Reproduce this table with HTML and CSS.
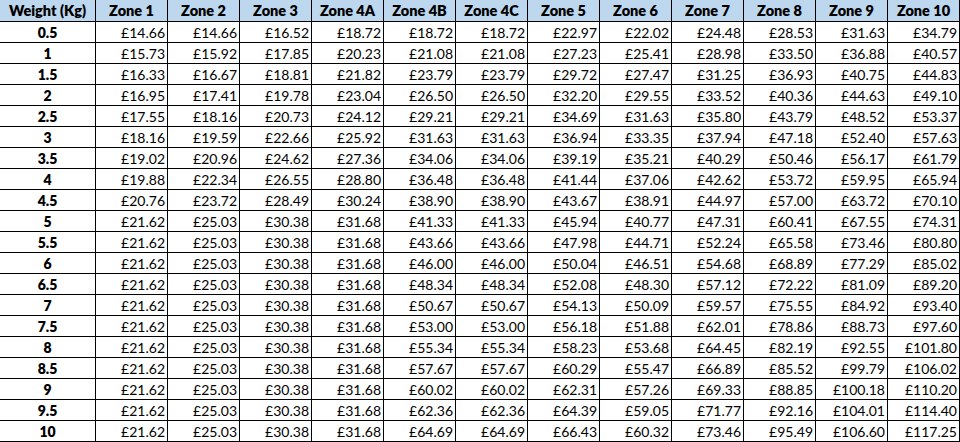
FILE: index.html
```html
<!DOCTYPE html>
<html lang="en">
<head>
<meta charset="utf-8">
<title>Rates</title>
<link rel="stylesheet" href="styles.css">
</head>
<body>
<table class="rates">
<thead>
<tr><th>Weight (Kg)</th><th>Zone 1</th><th>Zone 2</th><th>Zone 3</th><th>Zone 4A</th><th>Zone 4B</th><th>Zone 4C</th><th>Zone 5</th><th>Zone 6</th><th>Zone 7</th><th>Zone 8</th><th>Zone 9</th><th>Zone 10</th></tr>
</thead>
<tbody>
<tr><th>0.5</th><td>£14.66</td><td>£14.66</td><td>£16.52</td><td>£18.72</td><td>£18.72</td><td>£18.72</td><td>£22.97</td><td>£22.02</td><td>£24.48</td><td>£28.53</td><td>£31.63</td><td>£34.79</td></tr>
<tr><th>1</th><td>£15.73</td><td>£15.92</td><td>£17.85</td><td>£20.23</td><td>£21.08</td><td>£21.08</td><td>£27.23</td><td>£25.41</td><td>£28.98</td><td>£33.50</td><td>£36.88</td><td>£40.57</td></tr>
<tr><th>1.5</th><td>£16.33</td><td>£16.67</td><td>£18.81</td><td>£21.82</td><td>£23.79</td><td>£23.79</td><td>£29.72</td><td>£27.47</td><td>£31.25</td><td>£36.93</td><td>£40.75</td><td>£44.83</td></tr>
<tr><th>2</th><td>£16.95</td><td>£17.41</td><td>£19.78</td><td>£23.04</td><td>£26.50</td><td>£26.50</td><td>£32.20</td><td>£29.55</td><td>£33.52</td><td>£40.36</td><td>£44.63</td><td>£49.10</td></tr>
<tr><th>2.5</th><td>£17.55</td><td>£18.16</td><td>£20.73</td><td>£24.12</td><td>£29.21</td><td>£29.21</td><td>£34.69</td><td>£31.63</td><td>£35.80</td><td>£43.79</td><td>£48.52</td><td>£53.37</td></tr>
<tr><th>3</th><td>£18.16</td><td>£19.59</td><td>£22.66</td><td>£25.92</td><td>£31.63</td><td>£31.63</td><td>£36.94</td><td>£33.35</td><td>£37.94</td><td>£47.18</td><td>£52.40</td><td>£57.63</td></tr>
<tr><th>3.5</th><td>£19.02</td><td>£20.96</td><td>£24.62</td><td>£27.36</td><td>£34.06</td><td>£34.06</td><td>£39.19</td><td>£35.21</td><td>£40.29</td><td>£50.46</td><td>£56.17</td><td>£61.79</td></tr>
<tr><th>4</th><td>£19.88</td><td>£22.34</td><td>£26.55</td><td>£28.80</td><td>£36.48</td><td>£36.48</td><td>£41.44</td><td>£37.06</td><td>£42.62</td><td>£53.72</td><td>£59.95</td><td>£65.94</td></tr>
<tr><th>4.5</th><td>£20.76</td><td>£23.72</td><td>£28.49</td><td>£30.24</td><td>£38.90</td><td>£38.90</td><td>£43.67</td><td>£38.91</td><td>£44.97</td><td>£57.00</td><td>£63.72</td><td>£70.10</td></tr>
<tr><th>5</th><td>£21.62</td><td>£25.03</td><td>£30.38</td><td>£31.68</td><td>£41.33</td><td>£41.33</td><td>£45.94</td><td>£40.77</td><td>£47.31</td><td>£60.41</td><td>£67.55</td><td>£74.31</td></tr>
<tr><th>5.5</th><td>£21.62</td><td>£25.03</td><td>£30.38</td><td>£31.68</td><td>£43.66</td><td>£43.66</td><td>£47.98</td><td>£44.71</td><td>£52.24</td><td>£65.58</td><td>£73.46</td><td>£80.80</td></tr>
<tr><th>6</th><td>£21.62</td><td>£25.03</td><td>£30.38</td><td>£31.68</td><td>£46.00</td><td>£46.00</td><td>£50.04</td><td>£46.51</td><td>£54.68</td><td>£68.89</td><td>£77.29</td><td>£85.02</td></tr>
<tr><th>6.5</th><td>£21.62</td><td>£25.03</td><td>£30.38</td><td>£31.68</td><td>£48.34</td><td>£48.34</td><td>£52.08</td><td>£48.30</td><td>£57.12</td><td>£72.22</td><td>£81.09</td><td>£89.20</td></tr>
<tr><th>7</th><td>£21.62</td><td>£25.03</td><td>£30.38</td><td>£31.68</td><td>£50.67</td><td>£50.67</td><td>£54.13</td><td>£50.09</td><td>£59.57</td><td>£75.55</td><td>£84.92</td><td>£93.40</td></tr>
<tr><th>7.5</th><td>£21.62</td><td>£25.03</td><td>£30.38</td><td>£31.68</td><td>£53.00</td><td>£53.00</td><td>£56.18</td><td>£51.88</td><td>£62.01</td><td>£78.86</td><td>£88.73</td><td>£97.60</td></tr>
<tr><th>8</th><td>£21.62</td><td>£25.03</td><td>£30.38</td><td>£31.68</td><td>£55.34</td><td>£55.34</td><td>£58.23</td><td>£53.68</td><td>£64.45</td><td>£82.19</td><td>£92.55</td><td>£101.80</td></tr>
<tr><th>8.5</th><td>£21.62</td><td>£25.03</td><td>£30.38</td><td>£31.68</td><td>£57.67</td><td>£57.67</td><td>£60.29</td><td>£55.47</td><td>£66.89</td><td>£85.52</td><td>£99.79</td><td>£106.02</td></tr>
<tr><th>9</th><td>£21.62</td><td>£25.03</td><td>£30.38</td><td>£31.68</td><td>£60.02</td><td>£60.02</td><td>£62.31</td><td>£57.26</td><td>£69.33</td><td>£88.85</td><td>£100.18</td><td>£110.20</td></tr>
<tr><th>9.5</th><td>£21.62</td><td>£25.03</td><td>£30.38</td><td>£31.68</td><td>£62.36</td><td>£62.36</td><td>£64.39</td><td>£59.05</td><td>£71.77</td><td>£92.16</td><td>£104.01</td><td>£114.40</td></tr>
<tr><th>10</th><td>£21.62</td><td>£25.03</td><td>£30.38</td><td>£31.68</td><td>£64.69</td><td>£64.69</td><td>£66.43</td><td>£60.32</td><td>£73.46</td><td>£95.49</td><td>£106.60</td><td>£117.25</td></tr>
</tbody>
</table>
</body>
</html>
```
FILE: styles.css
```css
html, body {
  margin: 0;
  padding: 0;
  background: #ffffff;
}
.rates {
  border-collapse: separate;
  border-spacing: 0;
  table-layout: fixed;
  width: 960px;
  font-family: Lato, "Open Sans", sans-serif;
  font-size: 14px;
  color: #000;
}
.rates th,
.rates td {
  box-sizing: border-box;
  border-right: 1px solid #000;
  border-bottom: 1px solid #000;
  padding: 1px 2px 0 0;
  white-space: nowrap;
  overflow: hidden;
  width: 72px;
  height: 21px;
  line-height: 19px;
  vertical-align: middle;
}
.rates thead th {
  background: #bdd7ee;
  text-align: center;
  font-weight: 800;
  font-size: 14.5px;
  height: 22px;
  line-height: 21px;
  padding: 0;
}
.rates thead th:first-child,
.rates tbody th {
  width: 96px;
}
.rates tbody th {
  text-align: center;
  font-weight: 800;
  padding: 1px 0 0 0;
}
.rates td {
  text-align: right;
  font-weight: 400;
}
```
